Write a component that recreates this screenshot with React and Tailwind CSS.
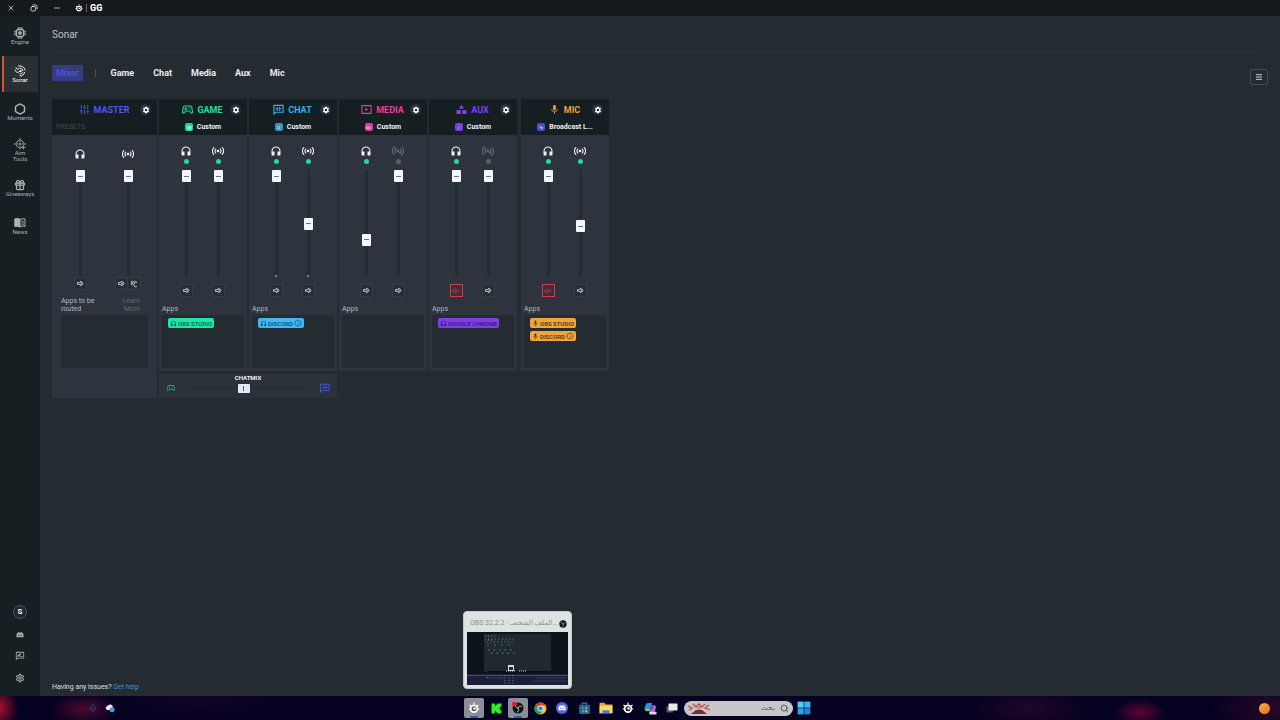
import React from "react";
import { Hexagon, Gift, X, Minus, SlidersVertical, Menu, Search, Mic } from "lucide-react";
import {
  MdHeadphones,
  MdOutlineSettings,
  MdOutlineSportsEsports,
  MdOutlineRateReview,
  MdHearing,
  MdMic,
  MdInfoOutline,
} from "react-icons/md";
import { FaDiscord } from "react-icons/fa";

const stroke = { fill: "none", stroke: "currentColor", strokeWidth: 2, strokeLinecap: "round" };

function Broadcast({ off, className }) {
  return (
    <svg viewBox="0 0 24 20" className={className} {...stroke} aria-hidden="true">
      <circle cx="12" cy="10" r="2.6" fill="currentColor" stroke="none" />
      <path strokeWidth="2.300" d="M7.500 6a6.500 6.500 0 0 0 0 8M16.500 6a6.500 6.500 0 0 1 0 8M3.500 3a11.500 11.500 0 0 0 0 14M20.500 3a11.500 11.500 0 0 1 0 14" />
      {off && <path d="M4 1l16 18" />}
    </svg>
  );
}

function ChatIcon({ className }) {
  return (
    <svg viewBox="0 0 24 24" className={className} {...stroke} strokeWidth="2.400" aria-hidden="true">
      <path d="M2 3h20v15H6l-4 4z" strokeLinejoin="miter" />
      <path d="M9.500 7v7M14.500 7v7M6.500 10.500h3M14.500 10.500h3" />
    </svg>
  );
}

function MediaIcon({ className }) {
  return (
    <svg viewBox="0 0 24 24" className={className} {...stroke} strokeWidth="2.400" aria-hidden="true">
      <rect x="2" y="3.500" width="20" height="17" rx="1" />
      <path d="M9.500 8v8l6-4z" fill="currentColor" stroke="none" />
    </svg>
  );
}

function GameIcon({ className }) {
  return (
    <svg viewBox="1 1 22 22" className={className} {...stroke} strokeWidth="2.200" strokeLinejoin="round" aria-hidden="true">
      <path d="M6.500 5h11a3 3 0 0 1 3 2.500L22 17a2 2 0 0 1-3.500 1.500L15.500 15h-7l-3 3.500A2 2 0 0 1 2 17l1.500-9.500a3 3 0 0 1 3-2.500z" />
      <path d="M8.500 8.500v4M6.500 10.500h4M15 8.500h.1M17 11.500h.1" />
    </svg>
  );
}

function AuxIcon({ className }) {
  return (
    <svg viewBox="0 0 24 24" className={className} fill="currentColor" aria-hidden="true">
      <path d="M12 1l5.500 9.500h-11z" />
      <rect x="1" y="13" width="9.500" height="9" rx="1" />
      <rect x="13.500" y="13" width="9.500" height="9" rx="1" />
    </svg>
  );
}

function ChipIcon({ className }) {
  return (
    <svg viewBox="0 0 24 24" className={className} {...stroke} aria-hidden="true">
      <path d="M8.500 1v3M12 1v3M15.500 1v3M8.500 20v3M12 20v3M15.500 20v3M1 8.500h3M1 12h3M1 15.500h3M20 8.500h3M20 12h3M20 15.500h3" />
      <rect x="5" y="5" width="14" height="14" rx="3" strokeWidth="2.600" />
      <rect x="9.500" y="9.500" width="5" height="5" rx="1" fill="currentColor" />
    </svg>
  );
}

function NewsIcon({ className }) {
  return (
    <svg viewBox="0 0 24 24" className={className} {...stroke} aria-hidden="true">
      <path d="M12 5c-3-2-7-2-10-1v15c3-1 7-1 10 1 3-2 7-2 10-1V4c-3-1-7-1-10 1z" />
      <path d="M12 5v15c-3-2-7-2-10-1V4c3-1 7-1 10 1z" fill="currentColor" />
      <path d="M15.500 8.500h3.500M15.500 12h3.500M15.500 15.500h3.500" strokeWidth="1.600" />
    </svg>
  );
}

function SonarIcon({ className }) {
  return (
    <svg viewBox="0 0 24 24" className={className} {...stroke} aria-hidden="true">
      <path d="M4 5c0 4 5 5 7 1M2 10c1 6 8 6 10 2M9 2c6-1 12 2 13 8" />
      <path d="M13 7c3 0 5 2 5 4M21 15c-1 4-4 7-9 7M17 15c-1 2-3 3-5 3" />
      <circle cx="13" cy="12" r="1.200" fill="currentColor" />
    </svg>
  );
}

function AimIcon({ className }) {
  return (
    <svg viewBox="0 0 24 24" className={className} {...stroke} aria-hidden="true">
      <path d="M12 1v7M1 12h7M12 16v6M16 12h7M12 11v2M11 12h2" />
      <path d="M5 9a8 8 0 0 1 4-4M15 5a8 8 0 0 1 4 4M5 15a8 8 0 0 0 4 4M18.500 15v7M15 18.500h7" />
    </svg>
  );
}

function SpeakerIcon({ className }) {
  return (
    <svg viewBox="0 0 24 24" className={className} {...stroke} strokeWidth="2.800" aria-hidden="true">
      <path d="M3 9h5l6-5v16l-6-5H3z" strokeLinejoin="round" />
      <path d="M18.500 8a6 6 0 0 1 0 8" />
    </svg>
  );
}

function MutedIcon({ className }) {
  return (
    <svg viewBox="0 0 24 24" className={className} {...stroke} aria-hidden="true">
      <path d="M3 9.500h4l5-4.500v14l-5-4.500H3zM16 9.500l5 5M21 9.500l-5 5" />
    </svg>
  );
}

function GearIcon({ className }) {
  return (
    <svg viewBox="0 0 24 24" className={className} aria-hidden="true">
      <path d="M9.500 2h5l1 3 3-.5 2.500 4-2 2.500v2l2 2.500-2.500 4-3-.5-1 3h-5l-1-3-3 .5L3 15.500 5 13v-2L3 8.500l2.500-4 3 .5z" fill="currentColor" />
      <circle cx="12" cy="12" r="3.600" fill="#20272e" />
    </svg>
  );
}

function SteelLogo({ className, ring = "#23232b" }) {
  return (
    <svg viewBox="0 0 24 24" className={className} aria-hidden="true">
      <path d="M12 1v4M3 6l3 2.500M21 6l-3 2.500M1.500 14h4M22.500 14h-4" stroke="#fff" strokeWidth="2.400" />
      <circle cx="12" cy="13.500" r="8.500" fill="#fff" />
      <circle cx="12" cy="13.500" r="5" fill={ring} />
      <circle cx="13" cy="13" r="2.600" fill="#fff" />
    </svg>
  );
}

function ObsLogo({ className, recording }) {
  return (
    <svg viewBox="0 0 24 24" className={className} aria-hidden="true">
      <circle cx="12" cy="12" r="11" fill="#101113" />
      <g fill="none" stroke="#d6d6d8" strokeWidth="1.800">
        <path d="M7 4.500c-1 4 1 7 5 7.500M19.500 9c-3.500-1-7 0-7.500 3M10 20.500c3.500-1.500 4.500-5 2-8.500" />
      </g>
      {recording && <circle cx="5" cy="4" r="5" fill="#e3202c" />}
    </svg>
  );
}

const navItems = [
  { label: "Engine", icon: ChipIcon },
  { label: "Sonar", icon: SonarIcon, active: true },
  { label: "Moments", icon: Hexagon, weight: 3 },
  { label: "Aim Tools", icon: AimIcon },
  { label: "Giveaways", icon: Gift, weight: 2.5 },
  { label: "News", icon: NewsIcon },
];

function Sidebar() {
  return (
    <nav className="flex w-10 shrink-0 flex-col justify-between bg-[#161f21] text-[#a9b2b6]">
      <div className="flex flex-col gap-0.5 pt-0.5 pr-0.5">
        {navItems.map(({ label, icon: Icon, active, weight }) => (
          <button
            key={label}
            className={
              "ml-0.5 flex h-9 flex-col items-center justify-center " +
              (active ? "border-l-2 border-[#d9532c] bg-[#283034] pr-0.5 text-white" : "")
            }
          >
            <Icon className="size-3 shrink-0" {...(weight ? { strokeWidth: weight } : {})} />
            <span className="flex w-7 justify-center text-center text-[6px] leading-[6px]">
              {label === "Aim Tools" ? <>Aim<br />Tools</> : label}
            </span>
          </button>
        ))}
      </div>
      <div className="flex flex-col items-center gap-3 pb-[13px]">
        <button className="flex size-3.5 items-center justify-center rounded-full border border-[#4b5560] bg-[#20272e] text-[8px] font-bold text-white">S</button>
        <button aria-label="Discord"><FaDiscord className="size-2" /></button>
        <button aria-label="Feedback"><MdOutlineRateReview className="size-2.5" /></button>
        <button aria-label="Settings"><MdOutlineSettings className="size-2.5" /></button>
      </div>
    </nav>
  );
}

function Fader({ label, value }) {
  return (
    <input
      type="range"
      aria-label={label}
      defaultValue={value}
      className="h-[107px] w-[9px] appearance-none bg-transparent bg-[linear-gradient(#252c34,#252c34)] bg-[length:3px_100%] bg-center bg-no-repeat [direction:rtl] [writing-mode:vertical-lr] [&::-webkit-slider-thumb]:h-[12px] [&::-webkit-slider-thumb]:w-[9px] [&::-webkit-slider-thumb]:appearance-none [&::-webkit-slider-thumb]:rounded-[1px] [&::-webkit-slider-thumb]:bg-[#f4f6fc] [&::-webkit-slider-thumb]:bg-[linear-gradient(#6b7180,#6b7180)] [&::-webkit-slider-thumb]:bg-[length:5px_1px] [&::-webkit-slider-thumb]:bg-center [&::-webkit-slider-thumb]:bg-no-repeat"
    />
  );
}

function MuteButton({ muted, label }) {
  return (
    <button
      aria-label={label}
      className={
        "flex size-[13px] items-center justify-center border " +
        (muted ? "border-[#c8404e] bg-[#472a35] text-[#b34854]" : "border-[#363e47] bg-[#272e36] text-[#e4e8ec]")
      }
    >
      {muted ? <MutedIcon className="size-2" /> : <SpeakerIcon className="size-[7px]" />}
    </button>
  );
}

function Header({ name, icon: Icon, color, preset, badge, glyph }) {
  return (
    <div className="h-9 bg-[#151e20]">
      <div className="grid h-5 grid-cols-[10px_1fr_10px] items-center pr-[7px] pl-1.5">
        <span />
        <h2 className={"flex items-center justify-center gap-1 text-[9px] leading-5 font-bold " + color}>
          <Icon className="size-[11px]" />
          <span className="pt-px">{name}</span>
        </h2>
        <button aria-label={name + " settings"} className="flex size-[11px] items-center justify-center rounded-full bg-[#2b323b] text-white">
          <GearIcon className="size-2" />
        </button>
      </div>
      {preset ? (
        <button className="flex h-4 w-full items-center justify-center gap-1 text-[7px] font-bold text-[#eef1f5]">
          <span className={"flex size-2 items-center justify-center rounded-[2px] text-[5px] leading-none text-white/80 " + badge}>{glyph}</span>
          {preset}
        </button>
      ) : (
        <div className="flex h-4 items-center px-1 text-[7px] text-[#414a4c]">PRESETS</div>
      )}
    </div>
  );
}

function Output({ kind, off, value, muted, activity, name }) {
  return (
    <div className="flex flex-col items-center">
      <span className={off ? "text-[#646c77]" : "text-[#f0f2f5]"}>
        {kind === "phones" ? <MdHeadphones className="size-3" /> : <Broadcast off={off} className="size-3" />}
      </span>
      <span className={"mt-0.5 size-[5px] rounded-full " + (off ? "bg-[#59616c]" : "bg-[#22d9a2]")} />
      <div className="relative mt-[6px] flex">
        <Fader label={name} value={value} />
        {activity && <span className="absolute bottom-0 left-1/2 h-0.5 w-0.5 -translate-x-1/2 rounded-full bg-[#22d9a2]" />}
      </div>
      <div className="mt-[7px]">
        <MuteButton muted={muted} label={"Mute " + name} />
      </div>
    </div>
  );
}

function Chip({ icon: Icon, text, info, color }) {
  return (
    <div className={"flex h-[10px] items-center gap-px rounded-[2px] px-0.5 text-[6px] font-medium whitespace-nowrap " + color}>
      <Icon className="size-[7px]" />
      {text}
      {info && <MdInfoOutline className="size-2" />}
    </div>
  );
}

function Channel({ name, chips = [], phones, stream, ...header }) {
  return (
    <section className="w-[88px] bg-[#2d343d]">
      <Header name={name} {...header} />
      <div className="grid grid-cols-[32px_32px] pt-[10px] pl-[11px]">
        <Output kind="phones" name={name + " headphones"} {...phones} />
        <Output kind="stream" name={name + " stream"} {...stream} />
      </div>
      <div className="px-[3px] pt-2 pb-[3px]">
        <h3 className="text-[7px] leading-[8px] text-[#b3bac0]">Apps</h3>
        <div className="mt-0.5 flex h-[53px] flex-col items-start gap-[3px] bg-[#242b31] px-1.5 pt-[3px]">
          {chips.map((chip) => (
            <Chip key={chip.text} {...chip} />
          ))}
        </div>
      </div>
    </section>
  );
}

function Master() {
  return (
    <section className="w-[105px] self-stretch bg-[#2d343d]">
      <Header name="MASTER" icon={SlidersVertical} color="text-[#5058e6]" />
      <div className="grid grid-cols-[48px_48px] justify-items-center pt-[13px] pl-1 text-[#f0f2f5]">
        <div className="flex flex-col items-center gap-[10px]">
          <MdHeadphones className="size-3" />
          <Fader label="Master headphones" value={100} />
        </div>
        <div className="flex flex-col items-center gap-[10px]">
          <Broadcast className="size-3" />
          <Fader label="Master stream" value={100} />
        </div>
        <MuteButton label="Mute master headphones" />
        <div className="flex">
          <MuteButton label="Mute master stream" />
          <button aria-label="Monitor stream" className="flex size-[13px] items-center justify-center border border-l-0 border-[#363e47] bg-[#272e36]">
            <MdHearing className="size-2" />
          </button>
        </div>
      </div>
      <div className="px-[9px] pt-[7px]">
        <div className="flex justify-between pr-2 text-[7px] leading-[8px]">
          <h3 className="w-9 text-[#b3bac0]">Apps to be routed</h3>
          <a href="#learn" className="w-5 text-right text-[#5f6872]">Learn More</a>
        </div>
        <div className="mt-0.5 h-[53px] bg-[#242b31]" />
      </div>
    </section>
  );
}

function ChatMix() {
  return (
    <section className="flex h-6 flex-col items-center bg-[#2b323a]">
      <label htmlFor="chatmix" className="text-[6px] leading-[8px] font-bold text-[#eef1f5]">CHATMIX</label>
      <div className="flex w-full items-center justify-between px-[7px]">
        <MdOutlineSportsEsports className="size-2.5 text-[#25a183]" />
        <input
          id="chatmix"
          type="range"
          defaultValue="46"
          className="h-3 w-[122px] appearance-none bg-transparent bg-[linear-gradient(#272e36,#272e36)] bg-[length:100%_2px] bg-center bg-no-repeat [&::-webkit-slider-thumb]:h-[9px] [&::-webkit-slider-thumb]:w-3 [&::-webkit-slider-thumb]:appearance-none [&::-webkit-slider-thumb]:rounded-[1px] [&::-webkit-slider-thumb]:bg-[#e6e8fa] [&::-webkit-slider-thumb]:bg-[linear-gradient(#5b6170,#5b6170)] [&::-webkit-slider-thumb]:bg-[length:1px_5px] [&::-webkit-slider-thumb]:bg-center [&::-webkit-slider-thumb]:bg-no-repeat"
        />
        <ChatIcon className="size-2.5 text-[#4654d8]" />
      </div>
    </section>
  );
}

const full = { value: 100 };
const orange = "bg-[#efa540] text-[#4a2f08]";

function Mixer() {
  return (
    <div className="flex items-start gap-0.5">
      <Master />
      <div className="flex flex-col gap-[3px]">
        <div className="flex gap-0.5">
          <Channel
            name="GAME" icon={GameIcon} color="text-[#22e09d]" preset="Custom" badge="bg-[#22d39b]" glyph="◎"
            phones={full} stream={full}
            chips={[{ icon: MdHeadphones, text: "OBS STUDIO", color: "bg-[#20e6a5] text-[#0b5a45]" }]}
          />
          <Channel
            name="CHAT" icon={ChatIcon} color="text-[#35b1ee]" preset="Custom" badge="bg-[#2f97cf]" glyph="≡"
            phones={{ value: 100, activity: true }} stream={{ value: 50, activity: true }}
            chips={[{ icon: MdHeadphones, text: "DISCORD", info: true, color: "bg-[#3fb8f4] text-[#0f4a70]" }]}
          />
        </div>
        <ChatMix />
      </div>
      <Channel
        name="MEDIA" icon={MediaIcon} color="text-[#ea3d9f]" preset="Custom" badge="bg-[#e23a9e]" glyph="▭"
        phones={{ value: 33 }} stream={{ value: 100, off: true }}
      />
      <Channel
        name="AUX" icon={AuxIcon} color="text-[#7a43e6]" preset="Custom" badge="bg-[#7a3fdc]" glyph="♪"
        phones={{ value: 100, muted: true }} stream={{ value: 100, off: true }}
        chips={[{ icon: MdHeadphones, text: "GOOGLE CHROME", color: "bg-[#7f3fe6] text-[#30126e]" }]}
      />
      <div className="pl-0.5">
        <Channel
          name="MIC" icon={MdMic} color="text-[#e8a33c]" preset="Broadcast L..." badge="bg-[#4c50c8]" glyph="∿"
          phones={{ value: 100, muted: true }} stream={{ value: 47 }}
          chips={[
            { icon: MdMic, text: "OBS STUDIO", color: orange },
            { icon: MdMic, text: "DISCORD", info: true, color: orange },
          ]}
        />
      </div>
    </div>
  );
}

function TaskButton({ label, active, children }) {
  return (
    <button aria-label={label} className="flex h-6 w-[22px] items-center justify-center">
      <span className={"relative flex h-5 w-5 items-center justify-center rounded-[2px] " + (active ? "bg-[#8d8d98]" : "")}>
        {children}
        {active && <span className="absolute bottom-0 h-0.5 w-2 rounded-full bg-[#27659a]" />}
      </span>
    </button>
  );
}

function Preview() {
  return (
    <div className="absolute bottom-full left-0 mb-[7px] w-[109px] rounded-[4px] border border-[#c3c9ca] bg-[#dde2e2] p-[3px]">
      <div dir="ltr" className="flex h-[17px] items-center justify-between pr-px pl-[3px] text-[7px] whitespace-nowrap text-[#8b9092]">
        <span className="font-['Roboto','DejaVu_Sans',sans-serif]">OBS 32.2.2 - الملف الشخصـ...</span>
        <ObsLogo className="size-2 shrink-0" />
      </div>
      <svg viewBox="0 0 101 53" className="block w-full" aria-hidden="true">
        <rect width="101" height="53" fill="#0d131b" />
        <rect x="17" y="2" width="67" height="38" fill="#20292d" />
        <g stroke="#b4bec8" strokeWidth="1">
          <path d="M18 4h10M18 8h7" strokeDasharray="1 2" opacity=".6" />
          <path d="M21 7h26M20 10h27" strokeDasharray="1 2.500" opacity=".6" />
          <path d="M20 13h27" strokeDasharray="2 5" opacity=".4" />
          <path d="M21 18h26M24 21h24" strokeDasharray="1.500 4" opacity=".7" stroke="#76c8a5" />
        </g>
        <rect x="41" y="33" width="6" height="6" fill="#d3d8d8" />
        <rect x="42" y="35" width="4" height="3" fill="#232b33" />
        <path d="M20 39.500h64" stroke="#090a25" strokeWidth="1" />
        <path d="M39 39h9M52 39h8" stroke="#d8dde4" strokeDasharray="1 1" />
        <rect y="42" width="101" height="11" fill="#1c1f38" />
        <path d="M0 43.500h101" stroke="#4a438d" />
        <path d="M20 46h16M69 46h30M67 49h33" stroke="#343c5e" />
        <path d="M38 43v9M42 43v9M46 43v9M20 45v2" stroke="#a3a7bd" strokeDasharray="1 1.500" opacity=".7" />
      </svg>
    </div>
  );
}

function Taskbar() {
  return (
    <footer className="grid h-6 shrink-0 grid-cols-[1fr_auto_1fr] items-center bg-[#050120] bg-[radial-gradient(ellipse_18px_24px_at_0px_50%,#a3102c,transparent),radial-gradient(ellipse_34px_16px_at_84px_55%,#4b0a30,transparent),radial-gradient(ellipse_90px_24px_at_200px_0px,#150329,transparent),radial-gradient(ellipse_60px_24px_at_1030px_50%,#1f0729,transparent),radial-gradient(ellipse_26px_14px_at_1140px_70%,#5d0636,transparent),radial-gradient(ellipse_60px_30px_at_1270px_50%,#280827,transparent)]">
      <div className="flex items-center gap-[7px] pl-[88px]">
        <Mic className="size-2.5 text-[#2b3f77]" />
        <svg viewBox="0 0 24 24" className="size-2.5" aria-hidden="true">
          <path d="M3 15a5 5 0 0 1 3-8 7 7 0 0 1 13 2l-3 8H5z" fill="#e4edf6" />
          <circle cx="17" cy="16" r="6" fill="#4b9bdc" />
        </svg>
      </div>
      <div className="relative flex items-center pr-0.5">
        <Preview />
        <TaskButton label="SteelSeries GG" active><SteelLogo className="size-3" ring="#555560" /></TaskButton>
        <TaskButton label="Kick">
          <svg viewBox="0 0 20 20" className="size-[11px]" aria-hidden="true">
            <path d="M1 1h6v4h2V3h2V1h8v6h-2v2h-2v2h2v2h2v6h-8v-2H9v-2H7v4H1z" fill="#27f51c" />
          </svg>
        </TaskButton>
        <TaskButton label="OBS" active><ObsLogo className="size-3" recording /></TaskButton>
        <TaskButton label="Chrome">
          <svg viewBox="0 0 24 24" className="size-[13px]" aria-hidden="true">
            <circle cx="12" cy="12" r="11" fill="#fbc116" />
            <path d="M12 12L2.500 6.500A11 11 0 0 1 21.500 6.500H12z" fill="#e33b2e" />
            <path d="M12 12L2.500 6.500A11 11 0 0 0 11 23l6-9z" fill="#22a04b" />
            <circle cx="12" cy="12" r="5.500" fill="#fff" />
            <circle cx="12" cy="12" r="4.200" fill="#3b7de8" />
          </svg>
        </TaskButton>
        <TaskButton label="Discord">
          <span className="flex size-3 items-center justify-center rounded-full bg-[#5865e8] text-white"><FaDiscord className="size-2" /></span>
        </TaskButton>
        <TaskButton label="Store">
          <svg viewBox="0 0 24 24" className="size-[13px]" aria-hidden="true">
            <path d="M8 6V2h8v4" fill="none" stroke="#2d79b8" strokeWidth="2" />
            <rect x="2" y="5" width="20" height="17" rx="2" fill="#1a66a3" />
            <path d="M7 9h4v4H7z" fill="#d9583a" /><path d="M13 9h4v4h-4z" fill="#78b33e" />
            <path d="M7 15h4v4H7z" fill="#35a5e0" /><path d="M13 15h4v4h-4z" fill="#e0b234" />
          </svg>
        </TaskButton>
        <TaskButton label="File Explorer">
          <svg viewBox="0 0 24 24" className="size-3.5" aria-hidden="true">
            <path d="M1 3h8l3 3h11v15H1z" fill="#e8a92d" />
            <path d="M1 8h22v13H1z" fill="#fbd763" />
            <path d="M6 16h12v5H6z" fill="#2f87cf" />
          </svg>
        </TaskButton>
        <TaskButton label="SteelSeries"><SteelLogo className="size-3" ring="#100a26" /></TaskButton>
        <TaskButton label="Copilot">
          <svg viewBox="0 0 24 24" className="size-[13px]" aria-hidden="true">
            <path d="M7 2h8l-4 14H4a3 3 0 0 1-3-4l2-7a4 4 0 0 1 4-3z" fill="#2793dd" />
            <path d="M3 12h9l-1 5H5c-3 0-3-3-2-5z" fill="#7fc44c" />
            <path d="M14 6h5a3 3 0 0 1 3 4l-2 8a4 4 0 0 1-4 3h-6z" fill="#c05bd0" />
            <path d="M14 6h4l-3 8-4-1z" fill="#4855c9" />
            <rect x="10" y="18" width="13" height="5" rx="1" fill="#d8d8df" />
          </svg>
        </TaskButton>
        <TaskButton label="Task View">
          <svg viewBox="0 0 24 24" className="size-3" aria-hidden="true">
            <rect x="1" y="9" width="13" height="12" fill="#55565e" />
            <rect x="5" y="3" width="18" height="14" rx="1" fill="#e9e9ec" />
          </svg>
        </TaskButton>
        <label className="ml-px flex h-[15px] w-[109px] items-center rounded-full bg-[#c6c6cb] pr-1 pl-0.5">
          <svg viewBox="0 0 26 13" className="h-[13px] w-[26px] shrink-0" aria-hidden="true">
            <ellipse cx="13" cy="6.500" rx="12" ry="6" fill="#d5bfc0" />
            <path d="M2 4l4 2-3 2M23 3l-4 3 5 2M7 2l3 3 3-3 3 3 3-3" fill="none" stroke="#aa565b" strokeWidth="1.300" />
            <path d="M5 12l5-4h6l5 4z" fill="#703136" />
            <circle cx="13" cy="6" r="2" fill="#cd8d65" />
          </svg>
          <input aria-label="بحث" placeholder="بحث" dir="rtl" className="w-0 min-w-0 flex-1 bg-transparent pr-[5px] text-[7px] placeholder:text-[#55555c]" />
          <Search className="size-[9px] shrink-0 text-[#33333a]" />
        </label>
        <TaskButton label="Start">
          <svg viewBox="0 0 24 24" className="size-3.5" aria-hidden="true">
            <path d="M1 1h10.500v10.500H1z" fill="#55c9f5" /><path d="M12.500 1H23v10.500H12.500z" fill="#3db4ee" />
            <path d="M1 12.500h10.500V23H1z" fill="#2ea2e6" /><path d="M12.500 12.500H23V23H12.500z" fill="#1c87d8" />
          </svg>
        </TaskButton>
      </div>
      <div className="flex justify-end pr-2.5">
        <span className="size-[11px] rounded-full bg-linear-to-br from-[#f9b445] to-[#e06c14]" />
      </div>
    </footer>
  );
}

export default function App() {
  return (
    <div className="flex min-h-screen flex-col bg-[#242c31] font-['Roboto','Noto_Sans',sans-serif] text-white">
      <header className="flex h-4 items-center bg-[#15191d] pl-[7px]">
        <button aria-label="Close" className="mr-[15px]"><X className="size-2" /></button>
        <button aria-label="Restore" className="mr-[15px]">
          <svg viewBox="0 0 16 16" className="size-2" {...stroke} strokeWidth="1.500"><rect x="2" y="5" width="9" height="9" rx="3" /><path d="M6 2h5a3 3 0 0 1 3 3v5" /></svg>
        </button>
        <button aria-label="Minimize" className="mr-[14px]"><Minus className="size-2" /></button>
        <SteelLogo className="size-2" ring="#15191d" />
        <span className="mx-[3px] h-2 w-px bg-[#c33a46]" />
        <span className="pt-px text-[9px] font-extrabold">GG</span>
      </header>
      <div className="flex flex-1">
        <Sidebar />
        <main className="flex flex-1 flex-col pr-3 pl-3">
          <div className="mr-1.5 flex h-[37px] items-center border-b border-[#2c353a]">
            <h1 className="text-[10px] text-[#b9c1c6]">Sonar</h1>
          </div>
          <div className="flex h-[46px] items-start justify-between pt-3">
            <div className="flex items-center text-[9px] leading-4 font-bold">
              <button className="h-4 bg-[#363c82] px-1 font-medium text-[#4b51e8]">Mixer</button>
              <span className="mx-3 h-2 w-px bg-[#485057]" />
              <div className="flex gap-[19px] pl-[3px] text-[#e8ebf0]">
                <button>Game</button>
                <button>Chat</button>
                <button>Media</button>
                <button>Aux</button>
                <button>Mic</button>
              </div>
            </div>
            <button aria-label="Menu" className="mt-1 flex h-4 w-[18px] items-center justify-center rounded-[2px] border border-[#434c51] text-[#c5cbcf]">
              <Menu className="size-2" strokeWidth={3} />
            </button>
          </div>
          <Mixer />
          <p className="mt-auto pb-1 text-[7px] leading-[10px] text-[#dde1e5]">
            Having any issues? <a href="#help" className="text-[#4094d3]">Get help</a>
          </p>
        </main>
      </div>
      <Taskbar />
    </div>
  );
}
